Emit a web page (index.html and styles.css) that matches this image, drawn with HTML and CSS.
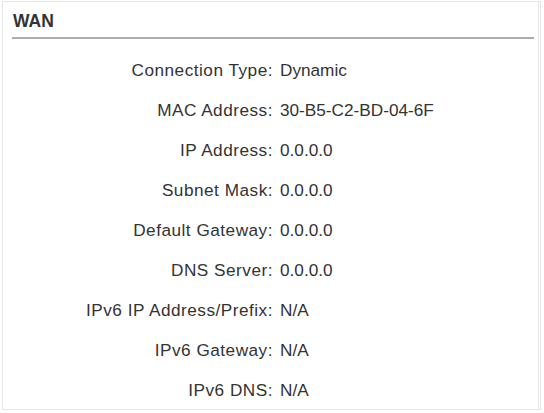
FILE: index.html
```html
<!DOCTYPE html>
<html lang="en">
<head>
  <meta charset="UTF-8" />
  <title>WAN</title>
  <link rel="stylesheet" href="styles.css">
</head>
<body>
  <div class="panel">
    <h3 class="panel-title">WAN</h3>
    <div class="info-list">
      <div class="info-row"><span class="info-label">Connection Type:</span><span class="info-value">Dynamic</span></div>
      <div class="info-row"><span class="info-label">MAC Address:</span><span class="info-value">30-B5-C2-BD-04-6F</span></div>
      <div class="info-row"><span class="info-label">IP Address:</span><span class="info-value">0.0.0.0</span></div>
      <div class="info-row"><span class="info-label">Subnet Mask:</span><span class="info-value">0.0.0.0</span></div>
      <div class="info-row"><span class="info-label">Default Gateway:</span><span class="info-value">0.0.0.0</span></div>
      <div class="info-row"><span class="info-label">DNS Server:</span><span class="info-value">0.0.0.0</span></div>
      <div class="info-row"><span class="info-label">IPv6 IP Address/Prefix:</span><span class="info-value">N/A</span></div>
      <div class="info-row"><span class="info-label">IPv6 Gateway:</span><span class="info-value">N/A</span></div>
      <div class="info-row"><span class="info-label">IPv6 DNS:</span><span class="info-value">N/A</span></div>
    </div>
  </div>
</body>
</html>
```

FILE: styles.css
```css
html, body { margin: 0; padding: 0; background: #fff; }
body { font-family: "Liberation Sans", Arial, sans-serif; color: #333; }

.panel {
  margin: 1px 3px 1px 2px;
  height: 409px;
  box-sizing: border-box;
  border: 1px solid #e6e6e6;
  border-right: 3px double #e6e6e6;
  padding: 0 4px 0 9px;
}

.panel-title {
  margin: 0;
  padding: 9px 0 6px 1px;
  font-size: 17.5px;
  font-weight: bold;
  line-height: 20px;
  color: #333;
  border-bottom: 2px solid #adadad;
}

.info-list { padding-top: 11px; }

.info-row {
  display: grid;
  grid-template-columns: 261px 1fr;
  column-gap: 7px;
  height: 40px;
  align-items: center;
  font-size: 17.2px;
}

.info-label { text-align: right; letter-spacing: 0.5px; }
```
